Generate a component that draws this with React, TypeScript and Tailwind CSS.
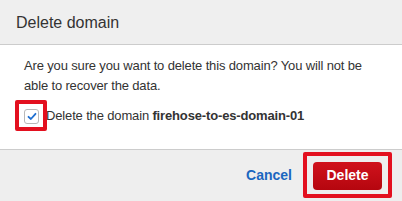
import React from "react";

export default function App() {
  return (
    <div className="w-[402px] h-[201px] overflow-hidden bg-white flex flex-col" style={{ fontFamily: '"Liberation Sans", Arial, Helvetica, sans-serif' }}>
      <div className="h-[45px] shrink-0 bg-[#efefef] border-b border-[#cccccc] flex items-center pl-4 pt-[1px]">
        <span className="text-[16px] text-[#333333] leading-none">Delete domain</span>
      </div>
      <div className="h-[104px] shrink-0 px-6 pt-[11px]">
        <p className="text-[13px] leading-[20px] text-[#333333] tracking-[-0.15px]">
          Are you sure you want to delete this domain? You will not be able to recover the data.
        </p>
        <div className="mt-[10px] flex items-center h-[20px]">
          <div className="relative w-[15px] h-[15px] shrink-0">
            <div className="w-[15px] h-[15px] rounded-[3px] border border-[#b8b8b8] bg-white flex items-center justify-center">
              <svg width="10" height="9" viewBox="0 0 10 9">
                <path d="M1.5 4.8 L3.9 7 L8.5 1.8" fill="none" stroke="#1f6fd1" strokeWidth="1.8" strokeLinecap="round" strokeLinejoin="round" />
              </svg>
            </div>
            <div className="absolute left-[-9px] top-[-9px] w-[32px] h-[31px] border-[4px] border-[#e3101f] rounded-[2px]" />
          </div>
          <span className="ml-[7px] text-[13px] text-[#333333] tracking-[-0.15px]">
            Delete the domain <b className="font-bold">firehose-to-es-domain-01</b>
          </span>
        </div>
      </div>
      <div className="flex-1 bg-[#eeeeee] border-t border-[#cccccc] flex items-center justify-end pr-5">
        <span className="text-[14px] font-bold text-[#1b66bf] mr-[21px]">Cancel</span>
        <div className="relative">
          <button className="w-[69px] h-[28px] rounded-[4px] bg-gradient-to-b from-[#d0121c] to-[#b5060f] text-white text-[14px] font-bold">
            Delete
          </button>
          <div className="absolute left-[-10px] top-[-10px] w-[89px] h-[46px] border-[4px] border-[#e3101f] rounded-[2px]" />
        </div>
      </div>
    </div>
  );
}
